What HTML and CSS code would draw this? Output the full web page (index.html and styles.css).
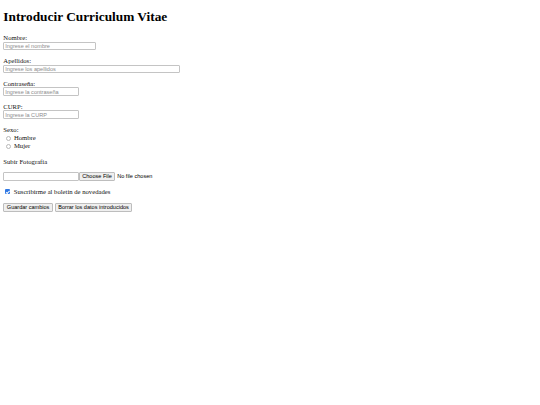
FILE: index.html
```html
<!DOCTYPE html>
<html lang="es">
<head>
<meta charset="utf-8">
<title>Introducir Curriculum Vitae</title>
<link rel="stylesheet" href="styles.css">
</head>
<body>
<h1 class="title">Introducir Curriculum Vitae</h1>
<form class="cv-form">
  <div class="field">
    <label class="field-label" for="nombre">Nombre:</label>
    <input class="in w-nombre" type="text" id="nombre" placeholder="Ingrese el nombre">
  </div>
  <div class="field">
    <label class="field-label" for="apellidos">Apellidos:</label>
    <input class="in w-apellidos" type="text" id="apellidos" placeholder="Ingrese los apellidos">
  </div>
  <div class="field">
    <label class="field-label" for="pass">Contraseña:</label>
    <input class="in w-short" type="password" id="pass" placeholder="Ingrese la contraseña">
  </div>
  <div class="field">
    <label class="field-label" for="curp">CURP:</label>
    <input class="in w-short" type="text" id="curp" placeholder="Ingrese la CURP">
  </div>
  <div class="field">
    <span class="field-label">Sexo:</span>
    <div class="options">
      <div class="opt"><input class="radio" type="radio" name="sexo" id="h"><label for="h">Hombre</label></div>
      <div class="opt"><input class="radio" type="radio" name="sexo" id="m"><label for="m">Mujer</label></div>
    </div>
  </div>
  <p class="photo-label">Subir Fotografía</p>
  <div class="file-row">
    <input class="in w-short" type="text"><input class="file" type="file">
  </div>
  <div class="check-row">
    <input class="check" type="checkbox" id="sus" checked><label for="sus">Suscribirme al boletín de novedades</label>
  </div>
  <div class="buttons">
    <button class="btn" type="button">Guardar cambios</button>
    <button class="btn" type="reset">Borrar los datos introducidos</button>
  </div>
</form>
</body>
</html>
```
FILE: styles.css
```css
html {
  background: #ffffff;
}
body {
  margin: 3.333px;
  font-family: "Liberation Serif", "Times New Roman", serif;
  font-size: 6.667px;
  line-height: 7.67px;
  color: #111111;
}
.title {
  font-size: 13.333px;
  line-height: 15.33px;
  font-weight: bold;
  color: #000000;
  margin: 5.9px 0 9.3px;
}
.cv-form {
  display: flex;
  flex-direction: column;
  align-items: flex-start;
}
.field {
  display: flex;
  flex-direction: column;
  align-items: flex-start;
  margin-top: 6.43px;
}
.field:first-child {
  margin-top: 0;
}
.field-label {
  line-height: 7.67px;
}
.in {
  box-sizing: border-box;
  height: 8.9px;
  margin: 0;
  padding: 0 0.9px;
  border: 1px solid #c4c4c4;
  border-radius: 1px;
  background: #ffffff;
  font-family: "Liberation Sans", Arial, sans-serif;
  font-size: 5.556px;
  color: #000000;
  outline: none;
}
.in::placeholder {
  color: #8c8c8c;
}
.w-nombre { width: 92.5px; }
.w-apellidos { width: 177px; }
.w-short { width: 75.4px; }
.options {
  margin-top: 0.6px;
  display: flex;
  flex-direction: column;
}
.opt {
  display: flex;
  align-items: center;
  height: 8px;
}
.radio {
  appearance: none;
  -webkit-appearance: none;
  box-sizing: border-box;
  width: 5.4px;
  height: 5.4px;
  margin: 0.6px 2.9px 0 2.3px;
  border: 1px solid #b8b8b8;
  border-radius: 50%;
  background: #ffffff;
}
.photo-label {
  margin: 7.7px 0 0;
  line-height: 7.67px;
}
.file-row {
  display: flex;
  align-items: center;
  margin-top: 6.63px;
}
.file {
  width: 80px;
  height: 8.9px;
  margin: 0;
  padding: 0;
  border: 0;
  font-family: "Liberation Sans", Arial, sans-serif;
  font-size: 5.556px;
  color: #000000;
}
.file::file-selector-button {
  box-sizing: border-box;
  height: 8.9px;
  margin: 0 1.9px 0 0;
  padding: 0 2.5px;
  border: 1px solid #bdbdbd;
  border-radius: 1px;
  background: #efefef;
  font: inherit;
  color: #000000;
}
.check-row {
  display: flex;
  align-items: center;
  height: 8px;
  margin-top: 6.6px;
}
.check {
  appearance: none;
  -webkit-appearance: none;
  position: relative;
  box-sizing: border-box;
  width: 5.2px;
  height: 5.2px;
  margin: 0 3.4px 0 1.9px;
  border-radius: 1px;
  background: #2f78e4;
}
.check::after {
  content: "";
  position: absolute;
  left: 1.7px;
  top: 0.6px;
  width: 1.2px;
  height: 2.6px;
  border: solid #ffffff;
  border-width: 0 0.9px 0.9px 0;
  transform: rotate(45deg);
}
.buttons {
  display: flex;
  gap: 1.9px;
  margin-top: 7.5px;
}
.btn {
  box-sizing: border-box;
  height: 8.9px;
  margin: 0;
  padding: 0 2.5px;
  border: 1px solid #bdbdbd;
  border-radius: 1px;
  background: #efefef;
  font-family: "Liberation Sans", Arial, sans-serif;
  font-size: 5.556px;
  color: #000000;
}
```
